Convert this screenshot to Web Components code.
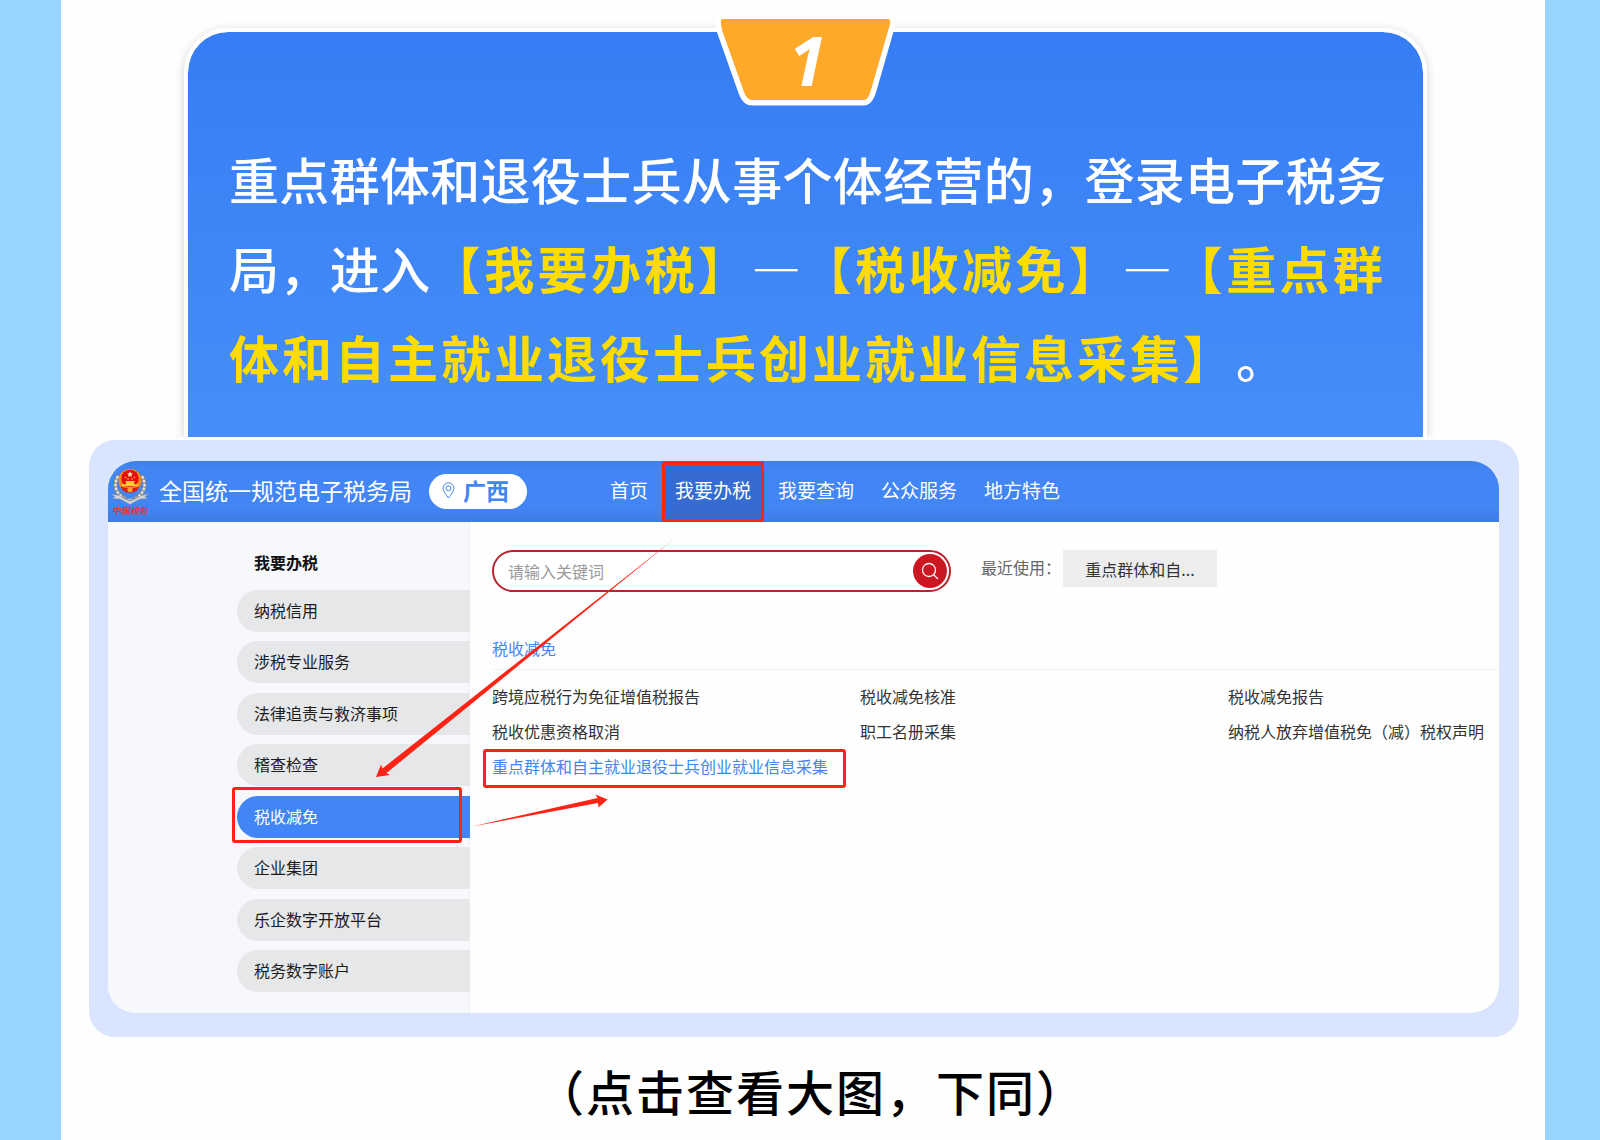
<!DOCTYPE html>
<html lang="zh-CN">
<head>
<meta charset="utf-8">
<title>电子税务局操作指引</title>
<style>
  body { margin: 0; font-family: "Noto Sans CJK SC", sans-serif; text-spacing-trim: space-all; }
</style>
</head>
<body>
<guide-poster>
  <step-card number="1"><span>重点群体和退役士兵从事个体经营的，登录电子税务</span><span>局，进入</span><b>【我要办税】</b><span>—</span><b>【税收减免】</b><span>—</span><b>【重点群</b><b>体和自主就业退役士兵创业就业信息采集】</b><span>。</span></step-card>
  <app-frame>
    <app-header slot="header" region="广西">
      <nav-link>首页</nav-link>
      <nav-link active>我要办税</nav-link>
      <nav-link>我要查询</nav-link>
      <nav-link>公众服务</nav-link>
      <nav-link>地方特色</nav-link>
    </app-header>
    <side-menu slot="side" heading="我要办税">
      <side-item>纳税信用</side-item>
      <side-item>涉税专业服务</side-item>
      <side-item>法律追责与救济事项</side-item>
      <side-item>稽查检查</side-item>
      <side-item active>税收减免</side-item>
      <side-item>企业集团</side-item>
      <side-item>乐企数字开放平台</side-item>
      <side-item>税务数字账户</side-item>
    </side-menu>
    <search-bar></search-bar>
    <service-list heading="税收减免">
      <service-link>跨境应税行为免征增值税报告</service-link>
      <service-link>税收减免核准</service-link>
      <service-link>税收减免报告</service-link>
      <service-link>税收优惠资格取消</service-link>
      <service-link>职工名册采集</service-link>
      <service-link>纳税人放弃增值税免（减）税权声明</service-link>
      <service-link active>重点群体和自主就业退役士兵创业就业信息采集</service-link>
    </service-list>
    <guide-arrows slot="overlay"></guide-arrows>
  </app-frame>
  <poster-caption>（点击查看大图，下同）</poster-caption>
</guide-poster>

<script>
const define = (name, render) => customElements.define(name, class extends HTMLElement {
  constructor() {
    super();
    this.attachShadow({ mode: 'open' });
  }
  connectedCallback() {
    this.shadowRoot.innerHTML = render(this);
  }
});

define('guide-poster', () => `
  <style>
    :host { display: block; box-sizing: border-box; min-height: 100vh; padding: 0 55px 0 61px; background: #99d3ff; }
    main { box-sizing: border-box; min-height: 100vh; padding-top: 28px; background: #fefefe; display: flex; flex-direction: column; }
  </style>
  <main><slot></slot></main>`);

define('step-card', el => `
  <style>
    :host {
      display: block; position: relative; margin: 0 118px 0 123px; padding: 102px 37px 36px 41px;
      border: 4px solid #fff; border-bottom: 0; border-radius: 44px 44px 0 0;
      background: linear-gradient(#367df5, #468ef8) padding-box;
      box-shadow: 0 2px 8px rgba(90, 50, 50, .24); clip-path: inset(-20px -20px 0 -20px);
      color: #fff;
    }
    p { margin: 0; font-size: 50px; font-weight: 500; line-height: 89px; text-align: justify; }
    ::slotted(b) { color: #ffdc00; font-weight: 700; letter-spacing: 3px; }
    .badge { position: absolute; top: -19px; left: 50%; margin-left: -90px; width: 180px; height: 94px; }
    .badge svg { position: absolute; inset: 0; }
    .badge span { position: absolute; inset: 0; padding-left: 4px; text-align: center; font: italic 700 68px/94px "Open Sans", sans-serif; }
  </style>
  <div class="badge">
    <svg width="180" height="94" viewBox="0 0 180 94" aria-hidden="true">
      <g transform="translate(0 -13)">
      <path d="M5 22Q4 19 7 19H172Q175 19 174 24L155 90Q152 100 148 100H36Q31 100 28 92L6 30Q5 26 5 22Z" fill="#fff" stroke="#fff" stroke-width="11" stroke-linejoin="round"/>
      <path d="M5 22Q4 19 7 19H172Q175 19 174 24L155 90Q152 100 148 100H36Q31 100 28 92L6 30Q5 26 5 22Z" fill="#ffa92b"/>
      </g>
    </svg>
    <span>${el.getAttribute('number')}</span>
  </div>
  <p><slot></slot></p>`);

define('app-frame', () => `
  <style>
    :host { display: block; margin: 3px 26px 0 28px; padding: 21px 20px 24px 19px; background: #d9e5ff; border-radius: 26px; font-size: 16px; color: #333; }
    .window { position: relative; border-radius: 28px; overflow: hidden; background: #fefefe; }
    .body { display: flex; min-height: 491px; }
    .content { flex: 1; min-width: 0; padding: 28px 0 0 22px; }
  </style>
  <div class="window">
    <slot name="header"></slot>
    <div class="body">
      <slot name="side"></slot>
      <div class="content"><slot></slot></div>
    </div>
    <slot name="overlay"></slot>
  </div>`);

define('app-header', el => `
  <style>
    :host { display: block; }
    header { display: flex; align-items: center; height: 61px; padding-left: 3px; color: #fff;
      background: linear-gradient(#3f7fe6, #4285f5 8px, #4285f5 46px, #3f7ce0); }
    .logo { display: flex; flex-direction: column; align-items: center; width: 38px; margin-right: 10px; }
    .logo small { font: italic 700 9px/11px "Noto Sans CJK SC", sans-serif; color: #e0392c; white-space: nowrap; }
    .title { padding-bottom: 2px; font-size: 23px; line-height: 35px; white-space: nowrap; }
    .region { display: flex; align-items: center; gap: 8px; height: 35px; margin-left: 17px; padding: 0 18px 2px 13px; border: 0; border-radius: 18px;
      background: #fff; color: #4285f5; font: 700 23px/33px "Noto Sans CJK SC", sans-serif; }
    nav { display: flex; gap: 1px; margin-left: 70px; height: 100%; }
  </style>
  <header>
    <div class="logo">
      <svg width="38" height="37" viewBox="0 0 38 37" aria-hidden="true">
        <g fill="none" stroke-linecap="round">
          <path d="M6.500 9C2.500 17 4.500 25 13 30M31.500 9C35.500 17 33.500 25 25 30" stroke="#7f858d" stroke-width="4.500"/>
          <path d="M6.500 9C2.500 17 4.500 25 13 30M31.500 9C35.500 17 33.500 25 25 30" stroke="#dfe2e5" stroke-width="2.600" stroke-dasharray=".6 3.400"/>
        </g>
        <path d="M0 26L8 27.500Q13 31 19 31Q25 31 30 27.500L38 26L34 28.500L36 30.500L29 31L23 34L19 36.500L15 34L9 31L2 30.500L4 28.500Z" fill="#d4d7da" stroke="#92979d" stroke-width=".6"/>
        <path d="M12 29.500L19 33L26 29.500" fill="none" stroke="#777b80"/>
        <circle cx="19" cy="12.500" r="11.500" fill="#f28b16"/>
        <circle cx="19" cy="10.500" r="8.700" fill="#e60d0d"/>
        <path d="M19 3.200l.9 2 2.100.2-1.600 1.400.5 2.100-1.900-1.100-1.900 1.100.5-2.100L16 5.400l2.100-.2z" fill="#fff0b2"/>
        <g fill="#ffc93b"><circle cx="14.500" cy="9.500" r=".8"/><circle cx="17" cy="11" r=".8"/><circle cx="21" cy="11" r=".8"/><circle cx="23.500" cy="9.500" r=".8"/>
          <path d="M15 13h8l1 1.300h-1v2h4v2H11v-2h4v-2h-1z"/></g>
        <path d="M9.500 18.500Q19 22 28.500 18.500L26 22.500Q19 27 12 22.500Z" fill="#e31a0e"/>
        <circle cx="19" cy="21.500" r="2.600" fill="#ffa423"/>
      </svg>
      <small>中国税务</small>
    </div>
    <span class="title">全国统一规范电子税务局</span>
    <button class="region" type="button">
      <svg width="13" height="17" viewBox="0 0 13 17" fill="none" stroke="#4285f5" aria-hidden="true"><path d="M6.500 16C4.500 13 1 9.500 1 6.300a5.500 5.500 0 0 1 11 0C12 9.500 8.500 13 6.500 16Z"/><circle cx="6.500" cy="6.300" r="2.500"/></svg>
      ${el.getAttribute('region')}
    </button>
    <nav><slot></slot></nav>
  </header>`);

define('nav-link', () => `
  <style>
    :host { display: block; position: relative; }
    a { display: block; padding: 0 13px; font-size: 19px; line-height: 57px; height: 61px; color: #fff; text-decoration: none; white-space: nowrap; }
    :host([active]) a { background: #366bd2; }
    :host([active])::after { content: ""; position: absolute; inset: 1px 0 0 0; border: 3px solid #ff2316; border-radius: 3px; }
  </style>
  <a href="#"><slot></slot></a>`);

define('side-menu', el => `
  <style>
    :host { display: flex; flex: 0 0 362px; box-sizing: border-box; padding: 28px 0 21px 129px; background: #f7f8fb; border-right: 1px solid #eef0f2; }
    nav { flex: 1; display: flex; flex-direction: column; margin-right: -1px; }
    h2 { margin: 0 0 16px; padding-left: 17px; font-size: 16px; line-height: 24px; color: #111; }
    .items { flex: 1; display: flex; flex-direction: column; justify-content: space-between; }
  </style>
  <nav><h2>${el.getAttribute('heading')}</h2><div class="items"><slot></slot></div></nav>`);

define('side-item', () => `
  <style>
    :host { display: block; position: relative; }
    a { display: block; padding: 0 0 2px 17px; border-radius: 21px 0 0 21px; background: #e6e7e9; color: #1c1c1c; line-height: 40px; text-decoration: none; }
    :host([active]) a { background: #4285f5; color: #fff; }
    :host([active])::after { content: ""; position: absolute; inset: -9px 8px -5px -5px; border: 3px solid #ff2316; border-radius: 3px; }
  </style>
  <a href="#"><slot></slot></a>`);

define('search-bar', () => `
  <style>
    :host { display: flex; align-items: flex-start; gap: 30px; }
    form { display: flex; align-items: center; box-sizing: border-box; width: 459px; height: 42px; padding: 0 2px 0 14px; border: 2px solid #b9232d; border-radius: 21px; background: #fff; }
    input { flex: 1; min-width: 0; border: 0; padding: 0; outline: 0; background: none; font: inherit; color: #333; }
    input::placeholder { color: #999; opacity: 1; }
    .go { display: grid; place-items: center; width: 34px; height: 34px; padding: 0; border: 0; border-radius: 50%; background: #cb1722; }
    .recent { display: flex; align-items: flex-start; gap: 2px; color: #666; line-height: 34px; }
    .chip { width: 154px; height: 37px; padding: 0; border: 0; background: #ededed; font: inherit; color: #333; }
  </style>
  <form>
    <input type="text" aria-label="关键词" placeholder="请输入关键词">
    <button class="go" type="button" aria-label="搜索">
      <svg width="18" height="18" viewBox="0 0 18 18" fill="none" stroke="#fff" stroke-width="1.300" aria-hidden="true"><circle cx="8" cy="8" r="6.500"/><path d="M12.600 12.600L17 17"/></svg>
    </button>
  </form>
  <div class="recent"><span>最近使用：</span><button class="chip" type="button">重点群体和自...</button></div>`);

define('service-list', el => `
  <style>
    :host { display: block; margin-top: 44px; }
    h3 { margin: 0 0 9px; padding-bottom: 9px; border-bottom: 1px solid #f1f1f3; font-size: 16px; line-height: 24px; font-weight: 400; color: #4285f5; }
    .grid { display: grid; grid-template-columns: 368fr 368fr 271fr; }
  </style>
  <h3>${el.getAttribute('heading')}</h3><div class="grid"><slot></slot></div>`);

define('service-link', () => `
  <style>
    :host { display: block; min-width: 0; white-space: nowrap; line-height: 35px; }
    a { position: relative; display: inline-block; color: #333; text-decoration: none; }
    :host([active]) a { color: #4285f5; }
    :host([active]) a::after { content: ""; position: absolute; inset: 0 -18px -4px -9px; border: 3px solid #ff2316; border-radius: 3px; }
  </style>
  <a href="#"><slot></slot></a>`);

define('guide-arrows', () => `
  <style>
    :host { position: absolute; top: 0; left: 0; pointer-events: none; }
    svg { display: block; }
  </style>
  <svg width="600" height="400" viewBox="108 461 600 400" fill="#ff2316" aria-hidden="true">
    <path d="M376 777L381 764.500L382.500 768.500L674 539L386.500 773L390 775Z"/>
    <path d="M607.500 799.500L595.500 794.500L597.500 798L472 826.500L598 803L598.500 807.500Z"/>
  </svg>`);

define('poster-caption', () => `
  <style>
    :host { display: block; padding: 9px 0 0 16px; text-align: center; font-size: 48px; font-weight: 500; line-height: 89px; letter-spacing: 2px; color: #000; }
  </style>
  <slot></slot>`);
</script>
</body>
</html>
